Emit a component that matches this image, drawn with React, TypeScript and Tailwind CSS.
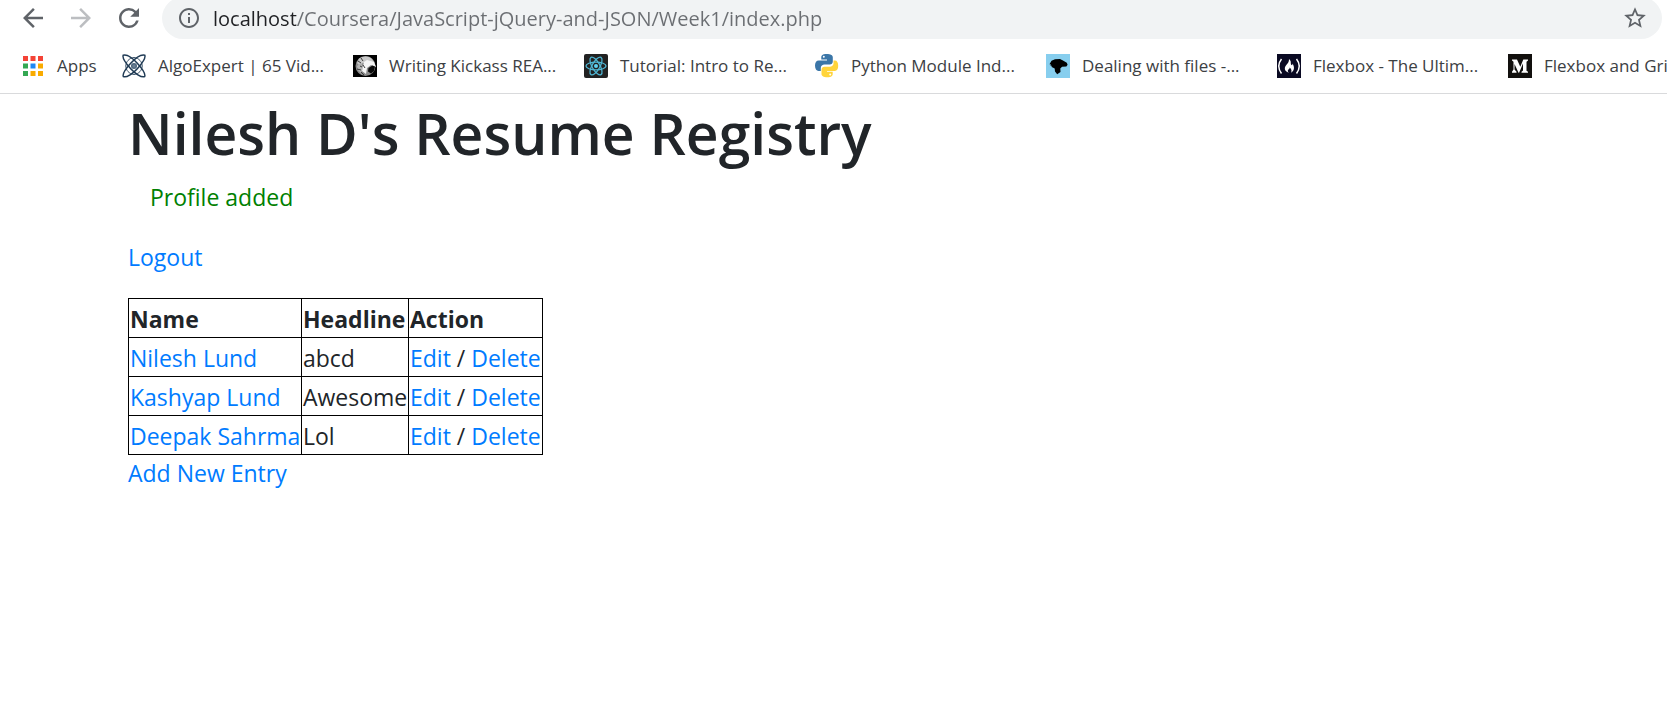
import type { ReactNode } from "react";
import { MdArrowBack, MdArrowForward, MdRefresh, MdInfoOutline, MdStarBorder } from "react-icons/md";

const appColors = [
  "#f44336", "#f44336", "#f44336",
  "#34a853", "#1e88f5", "#f9ab00",
  "#34a853", "#f9ab00", "#f9ab00",
];

function AppsIcon() {
  return (
    <svg viewBox="0 0 20 20" className="size-5 shrink-0" aria-hidden="true">
      {appColors.map((color, i) => (
        <rect key={i} x={(i % 3) * 7.5} y={Math.floor(i / 3) * 7.5} width="5" height="5" fill={color} />
      ))}
    </svg>
  );
}

function AlgoIcon() {
  return (
    <svg viewBox="0 0 24 24" className="size-6 shrink-0" fill="none" stroke="#1f3a54" strokeWidth="1.5" aria-hidden="true">
      <path d="M1.2 1.2C5 .2 11 4.500 15.500 9.500S24 20 22.600 22.600C19.500 24 12.500 19 8.500 14.500S0 4 1.200 1.200Z" />
      <path d="M22.800 1.200C19 .2 13 4.500 8.500 9.500S0 20 1.400 22.600C4.500 24 11.500 19 15.500 14.500S24 4 22.800 1.200Z" />
      <path d="M12 3.500C7 4 3.800 8 3.800 12S7 20 12 20.500C17 20 20.200 16 20.200 12S17 4 12 3.500Z" strokeWidth=".9" />
      <circle cx="12" cy="12" r="2.300" fill="#6d8296" stroke="#52697f" />
    </svg>
  );
}

function GlobeIcon() {
  return (
    <svg viewBox="0 0 24 24" className="size-6 shrink-0" aria-hidden="true">
      <rect y="1" width="24" height="22" fill="#000" />
      <circle cx="12.500" cy="12" r="10" fill="#8b8b8b" />
      <path d="M6 4.500Q12 1 18 4l3 4-6 2-5-1-4 2-2-2Z" fill="#c9c9c9" />
      <path d="M4 12l4-3 2 4-2 6-3-3Z" fill="#b5b5b5" />
      <path d="M11 8l3-2 7 2 2 5-5-2-4 3-1 6-4-3Z" fill="#f5f5f5" />
      <path d="M15.500 14l4-2.500 2.500 1-1 4.500-3 2.500-3-2Z" fill="#0a0a0a" />
      <path d="M5 7l3 2M8 4l2 3M4 15l4 1M8 18l3 3M10 11l2 3M7 12l2 1" stroke="#3d3d3d" strokeWidth="1" />
    </svg>
  );
}

function ReactLogo() {
  return (
    <svg viewBox="0 0 24 24" className="size-6 shrink-0" fill="none" stroke="#4fb6d3" strokeWidth="1.300" aria-hidden="true">
      <rect width="24" height="24" rx="2" fill="#222" stroke="none" />
      <ellipse cx="12" cy="12" rx="10" ry="3.900" />
      <ellipse cx="12" cy="12" rx="10" ry="3.900" transform="rotate(60 12 12)" />
      <ellipse cx="12" cy="12" rx="10" ry="3.900" transform="rotate(120 12 12)" />
      <circle cx="12" cy="12" r="2" fill="#5fd3f3" stroke="none" />
    </svg>
  );
}

function PythonLogo() {
  return (
    <svg viewBox="0 0 24 24" className="size-6 shrink-0" aria-hidden="true">
      <path
        fill="#3b76a8"
        d="M11.500 0C7.500 0 6.300 1.400 6.300 3.200V5.600h5.700v.8H3.800C1.500 6.400 0 8.300 0 11.600s1.400 5.300 3.500 5.300h2.300v-2.800c0-2 1.700-3.500 3.700-3.500h5.300c1.700 0 3-1.300 3-3V3.200C17.800 1.300 15.800 0 11.500 0Z"
      />
      <circle cx="8.800" cy="2.800" r="1" fill="#fff" />
      <path
        fill="#ffd43b"
        d="M12.500 23.300c4 0 5.200-1.400 5.200-3.200v-2.400H12v-.8h7.800c2.300 0 3.400-1.900 3.400-5.200S22 6.400 20 6.400h-1.500v2.800c0 2-1.700 3.500-3.700 3.500H9.500c-1.700 0-3 1.300-3 3v4.400c0 1.900 1.700 3.200 6 3.200Z"
      />
      <circle cx="15.200" cy="20.400" r="1" fill="#fff" />
    </svg>
  );
}

function DogIcon() {
  return (
    <svg viewBox="0 0 24 24" className="size-6 shrink-0" aria-hidden="true">
      <rect width="24" height="24" fill="#87ceee" />
      <path d="M3.500 10.200L5.500 6.800 9 5.200l5-.2 2.500 1.300 4.300 2.500.8 2-1.200 1.600-4.300.4-1.800 1.600.2 3.600-3.300 2.200L9 17.500l-.3-3-3.500-1.800 1-.8-1.900-.5.800-.8Z" fill="#000" />
    </svg>
  );
}

function CampIcon() {
  return (
    <svg viewBox="0 0 24 24" className="size-6 shrink-0" aria-hidden="true">
      <rect width="24" height="24" fill="#0a0a23" />
      <path d="M4.500 5Q-1 12 4.500 19.500M19.500 5Q25 12 19.500 19.500" fill="none" stroke="#fff" strokeWidth="1.500" />
      <path d="M12 5c3 2.500 1 4.500 2.500 6 1 .6 1-.8.8-1.500 2.200 2.500 2.700 7-1.300 9.200 1-2 .5-3.500-1.300-5.200 0 1.700-1.200 1.500-1.700 2.600-.5 1 0 2 .8 2.700-4.500-1.500-4.800-5-2.700-7.500C11 9 12 8 12 5Z" fill="#fff" />
    </svg>
  );
}

function MediumIcon() {
  return (
    <svg viewBox="0 0 24 24" className="size-6 shrink-0" aria-hidden="true">
      <rect width="24" height="24" fill="#12100e" />
      <path d="M4 5.500h5l3.300 7.300 3-7.300H20v1l-1.500 1.300v8.900L20 17.800v.9h-6.500v-.9l1.500-1.200V9.400l-3.900 9.300h-.6L6.500 9.900v5.700l2 2.200v.9H4v-.9l1.500-2.200V7.800L4 6.500Z" fill="#fff" />
    </svg>
  );
}

const bookmarks: { title: string; icon: ReactNode }[] = [
  { title: "AlgoExpert | 65 Vid...", icon: <AlgoIcon /> },
  { title: "Writing Kickass REA...", icon: <GlobeIcon /> },
  { title: "Tutorial: Intro to Re...", icon: <ReactLogo /> },
  { title: "Python Module Ind...", icon: <PythonLogo /> },
  { title: "Dealing with files -...", icon: <DogIcon /> },
  { title: "Flexbox - The Ultim...", icon: <CampIcon /> },
  { title: "Flexbox and Gri", icon: <MediumIcon /> },
];

const profiles = [
  { name: "Nilesh Lund", headline: "abcd" },
  { name: "Kashyap Lund", headline: "Awesome" },
  { name: "Deepak Sahrma", headline: "Lol" },
];

function TextLink({ children }: { children: ReactNode }) {
  return (
    <a href="#" className="text-[#007bff] hover:underline">
      {children}
    </a>
  );
}

function BrowserBar() {
  return (
    <header className="overflow-hidden border-b border-[#d9dadc]">
      <div className="flex h-[39px] items-end pr-[5px]">
        <div className="flex h-[42px] shrink-0 items-center gap-[18px] pl-[18px] text-[#5f6368]">
          <button aria-label="Back"><MdArrowBack className="size-[30px]" /></button>
          <button aria-label="Forward" className="text-[#bcbec1]"><MdArrowForward className="size-[30px]" /></button>
          <button aria-label="Reload"><MdRefresh className="size-[30px]" /></button>
        </div>
        <div className="ml-[18px] flex h-[42px] flex-1 items-center rounded-full bg-[#f1f3f4] pr-[14px] pl-[15px] text-[#5f6368]">
          <button aria-label="Site information"><MdInfoOutline className="size-6" /></button>
          <input
            aria-label="Address"
            defaultValue="localhost/Coursera/JavaScript-jQuery-and-JSON/Week1/index.php"
            className="ml-3 min-w-0 flex-1 bg-linear-to-r from-[#202124] from-[84px] to-[#6b6e72] to-[84px] bg-clip-text pt-0.5 text-xl text-transparent outline-none"
          />
          <button aria-label="Bookmark this page"><MdStarBorder className="size-[26px]" /></button>
        </div>
      </div>
      <nav aria-label="Bookmarks" className="flex h-[54px] items-center pl-[23px] text-[17px] text-[#3c4043]">
        <a href="#" className="flex w-[99px] shrink-0 items-center gap-[14px]">
          <AppsIcon />
          Apps
        </a>
        {bookmarks.map((b) => (
          <a key={b.title} href="#" className="flex w-[231px] shrink-0 items-center gap-3 whitespace-nowrap">
            {b.icon}
            {b.title}
          </a>
        ))}
      </nav>
    </header>
  );
}

export default function App() {
  return (
    <div className="min-h-screen overflow-hidden bg-white font-['Open_Sans','Noto_Sans',sans-serif]">
      <BrowserBar />
      <main className="pl-32 text-[23px] leading-9 text-[#212529]">
        <h1 className="pt-[3px] text-[57px] leading-[72px] font-semibold">Nilesh D's Resume Registry</h1>
        <p className="mt-[10px] pl-[22px] text-[#008000]">Profile added</p>
        <p className="mt-6"><TextLink>Logout</TextLink></p>
        <table className="mt-[23px] w-[415px] table-fixed border-collapse whitespace-nowrap [&_td]:border [&_td]:border-black [&_td]:px-px [&_td]:pt-0.5 [&_th]:border [&_th]:border-black [&_th]:px-px [&_th]:pt-0.5 [&_th]:text-left">
          <thead>
            <tr>
              <th className="w-[173px]">Name</th>
              <th className="w-[107px]">Headline</th>
              <th>Action</th>
            </tr>
          </thead>
          <tbody>
            {profiles.map((p) => (
              <tr key={p.name}>
                <td><TextLink>{p.name}</TextLink></td>
                <td>{p.headline}</td>
                <td><TextLink>Edit</TextLink> / <TextLink>Delete</TextLink></td>
              </tr>
            ))}
          </tbody>
        </table>
        <TextLink>Add New Entry</TextLink>
      </main>
    </div>
  );
}
